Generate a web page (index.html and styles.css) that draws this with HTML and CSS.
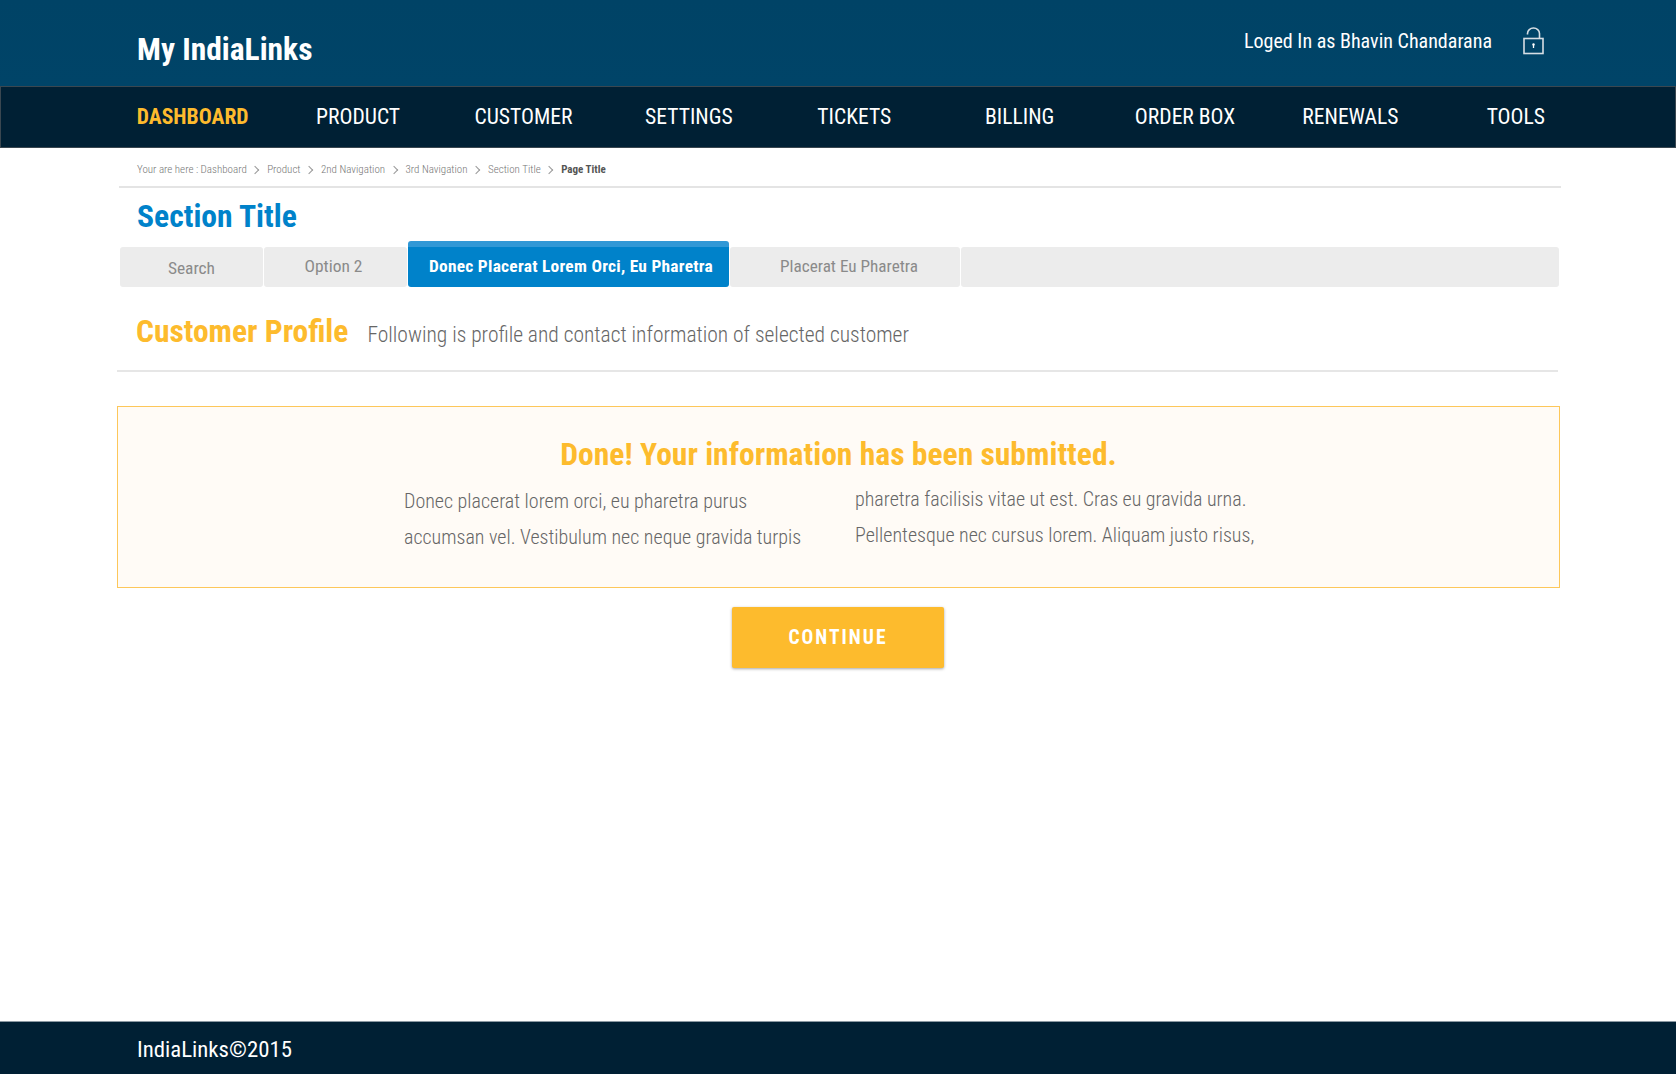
FILE: index.html
```html
<!DOCTYPE html>
<html lang="en">
<head>
<meta charset="utf-8">
<title>My IndiaLinks</title>
<link rel="stylesheet" href="styles.css">
</head>
<body>
<div class="page">
  <header class="topbar">
    <div class="brand">My IndiaLinks</div>
    <div class="user">
      <span class="user-name">Loged In as Bhavin Chandarana</span>
      <svg class="lock" width="22" height="28" viewBox="0 0 22 28" fill="none" stroke="#d6dee4" stroke-width="1.6">
        <path d="M4.5 7.5V6.5a6 5.5 0 0 1 12 0v5"/>
        <rect x="1" y="11.5" width="19" height="15"/>
        <path d="M10.5 18v3" stroke="#fff" stroke-width="1.3"/>
        <circle cx="10.5" cy="17.5" r="1.2" fill="#fff" stroke="none"/>
      </svg>
    </div>
  </header>
  <nav class="mainnav">
    <a class="nav-item is-current">DASHBOARD</a>
    <a class="nav-item">PRODUCT</a>
    <a class="nav-item">CUSTOMER</a>
    <a class="nav-item">SETTINGS</a>
    <a class="nav-item">TICKETS</a>
    <a class="nav-item">BILLING</a>
    <a class="nav-item">ORDER BOX</a>
    <a class="nav-item">RENEWALS</a>
    <a class="nav-item">TOOLS</a>
  </nav>
  <main class="content">
    <div class="crumbs">
      <span>Your are here : Dashboard</span><i class="sep"></i>
      <span>Product</span><i class="sep"></i>
      <span>2nd Navigation</span><i class="sep"></i>
      <span>3rd Navigation</span><i class="sep"></i>
      <span>Section Title</span><i class="sep"></i>
      <b>Page Title</b>
    </div>
    <h1 class="section-title">Section Title</h1>
    <div class="tabs">
      <div class="tab tab-search">Search</div>
      <div class="tab tab-option">Option 2</div>
      <div class="tab tab-active">Donec Placerat Lorem Orci, Eu Pharetra</div>
      <div class="tab tab-placerat">Placerat Eu Pharetra</div>
      <div class="tab tab-rest"></div>
    </div>
    <div class="profile-head">
      <h2 class="profile-title">Customer Profile</h2>
      <p class="profile-desc">Following is profile and contact information of selected customer</p>
    </div>
    <section class="notice">
      <h3 class="notice-title">Done! Your information has been submitted.</h3>
      <div class="notice-cols">
        <p class="col col-left">Donec placerat lorem orci, eu pharetra purus<br>accumsan vel. Vestibulum nec neque gravida turpis</p>
        <p class="col col-right">pharetra facilisis vitae ut est. Cras eu gravida urna.<br>Pellentesque nec cursus lorem. Aliquam justo risus,</p>
      </div>
    </section>
    <div class="actions"><button class="btn">CONTINUE</button></div>
  </main>
  <footer class="footer">IndiaLinks©2015</footer>
</div>
</body>
</html>
```
FILE: styles.css
```css
* { box-sizing: border-box; }
html, body { margin: 0; padding: 0; }
body { font-family: Roboto, "Liberation Sans", sans-serif; font-stretch: 75%; background: #fff; color: #666; }
.page { width: 1676px; height: 1074px; display: flex; flex-direction: column; overflow: hidden; }
.topbar { height: 86px; flex: none; background: linear-gradient(#004366, #004468); display: flex; justify-content: space-between; padding: 0 131px 0 137px; }
.brand { font-size: 31.5px; font-weight: 700; color: #fff; line-height: 36px; margin-top: 32px; }
.user { display: flex; align-items: flex-start; padding-top: 27px; }
.user-name { font-size: 20.05px; line-height: 28px; color: #fff; margin-right: 31px; }
.mainnav { height: 62px; flex: none; background: #002034; border: 1px solid #3a4750; display: grid; grid-template-columns: repeat(9, 165.4px); padding: 0 0 2px 109px; align-items: center; }
.nav-item { text-align: center; font-size: 21.6px; color: #fff; }
.nav-item.is-current { color: #fdbb2d; font-weight: 700; }
.content { flex: 1; display: flex; flex-direction: column; padding: 0 116px 0 117px; }
.crumbs { height: 40px; margin: 0 -1px 0 2px; border-bottom: 2px solid #e4e4e4; padding: 5px 0 0 18px; display: flex; align-items: center; font-size: 11px; font-weight: 300; color: #777; }
.crumbs b { color: #555; font-weight: 700; }
.sep { width: 6px; height: 6px; border-top: 1px solid #999; border-right: 1px solid #999; transform: rotate(45deg); margin: 0 9px 0 5.4px; }
.section-title { margin: 0; padding-left: 20px; height: 52px; line-height: 58px; font-size: 31.6px; font-weight: 700; color: #0082ca; }
.tabs { display: flex; align-items: flex-end; gap: 1px; margin-left: 3px; height: 47px; }
.tab { height: 40px; background: #ececec; border-radius: 3px; color: #8a8a8a; font-size: 17.4px; text-align: center; line-height: 38px; }
.tab-search { width: 143px; line-height: 42px; }
.tab-option { width: 143px; padding-right: 4px; }
.tab-active { width: 321px; height: 46px; padding-left: 5px; background: #0082ca; border-top: 6px solid #3198d6; line-height: 38px; color: #fff; font-weight: 700; letter-spacing: .26px; }
.tab-placerat { width: 230px; padding-left: 8px; font-size: 17.2px; }
.tab-rest { width: 598px; }
.profile-head { height: 85px; margin-right: 2px; border-bottom: 2px solid #e6e6e6; display: flex; align-items: flex-start; padding: 27px 0 0 19px; }
.profile-title { margin: 0; font-size: 31.5px; line-height: 36px; font-weight: 700; color: #fdbb2d; }
.profile-desc { margin: 4px 0 0 19px; font-size: 21.5px; line-height: 34px; font-weight: 300; color: #666; }
.notice { margin-top: 34px; height: 182px; background: #fffbf6; border: 1px solid #fdc75a; }
.notice-title { margin: 29px 0 0; text-align: center; font-size: 31.6px; line-height: 37px; font-weight: 700; color: #fdbb2d; }
.notice-cols { display: flex; padding-left: 286px; }
.col { margin: 0; font-size: 20px; line-height: 36px; font-weight: 300; color: #666; }
.col-left { width: 451px; margin-top: 10px; }
.col-right { margin-top: 8px; }
.actions { display: flex; justify-content: center; margin-top: 19px; padding-right: 1px; }
.btn { width: 212px; height: 61px; border: 0; border-radius: 2px; background: #fdbb2d; color: #fff; font-family: inherit; font-stretch: 75%; font-size: 19.5px; font-weight: 700; letter-spacing: 2px; box-shadow: 0 1px 3px rgba(0,0,0,.35); }
.footer { height: 53px; flex: none; background: #002034; border-top: 1px solid #8b99a3; color: #fff; font-size: 22.8px; line-height: 56px; padding-left: 137px; }
```
